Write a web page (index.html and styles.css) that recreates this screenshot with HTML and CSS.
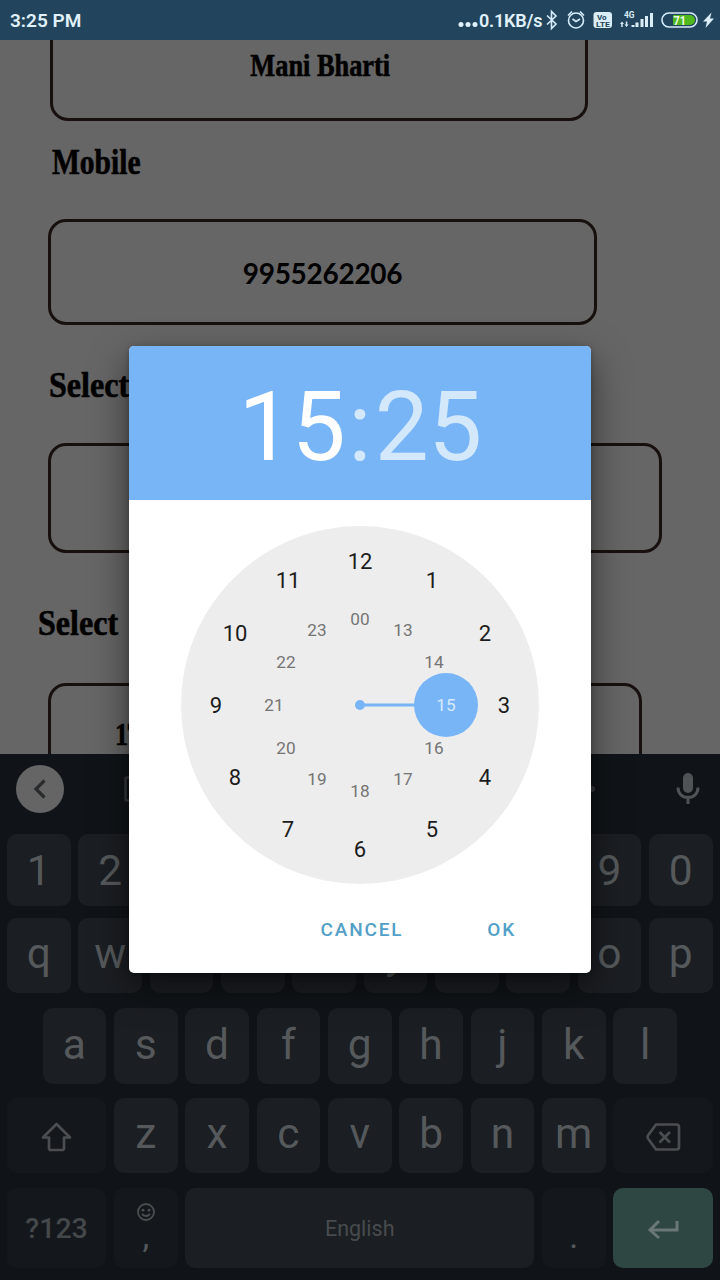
FILE: index.html
```html
<!DOCTYPE html>
<html lang="en">
<head>
<meta charset="utf-8">
<title>Time picker</title>
<link rel="stylesheet" href="styles.css">
</head>
<body>
<div class="screen">
  <header class="status">
    <span class="clock">3:25 PM</span>
    <div class="status-right">
      <svg class="dots" width="20" height="30" viewBox="0 0 20 30"><circle cx="3" cy="19.500" r="2.500"/><circle cx="10" cy="19.500" r="2.500"/><circle cx="17" cy="19.500" r="2.500"/></svg>
      <span class="speed">0.1KB/s</span>
      <svg class="status-icons" width="176" height="40" viewBox="0 0 176 40">
        <g fill="none" stroke="#d6ecfa" stroke-width="1.6">
          <path d="M3 15.500l9 8.500-4.500 4.500v-17l4.500 4.500-9 8.500"/>
          <circle cx="32" cy="20.500" r="7.500"/>
          <path d="M28.500 19l3.500 2.500 4-2.500M24 15.500l4-4M40 15.500l-4-4"/>
          <rect x="118" y="13" width="35" height="14" rx="7"/>
        </g>
        <rect x="49.500" y="12" width="18.500" height="16" rx="3" fill="#dbedf7"/>
        <text class="volte" x="53" y="19.500">Vo</text>
        <text class="volte" x="52" y="26.500" textLength="14" lengthAdjust="spacingAndGlyphs">LTE</text>
        <text class="network" x="80" y="17.500" textLength="10.500" lengthAdjust="spacingAndGlyphs">4G</text>
        <g fill="#dbedf7">
          <path d="M78 21.500l2 2.500h-1.300v3h-1.500v-3h-1.200zM82.500 27l-2-2.500h1.300v-3h1.500v3h1.200z"/>
          <rect x="87.500" y="25" width="3" height="2"/><rect x="91.500" y="22.500" width="3" height="4.500"/><rect x="96.500" y="19" width="3" height="8"/><rect x="101" y="16" width="3" height="11"/><rect x="106" y="13" width="3" height="14"/>
          <path d="M167.500 12.500l-8.500 9h4l-1.500 6.500 8.500-9.500h-4z"/>
        </g>
        <path d="M129 15h17a5 5 0 0 1 0 10h-17z" fill="#4fb81f"/>
        <text class="battery" x="129.500" y="24.600" textLength="12.500" lengthAdjust="spacingAndGlyphs">71</text>
      </svg>
    </div>
  </header>

  <main class="form">
    <div class="field name"><span class="serif value">Mani Bharti</span></div>
    <div class="label mobile-label"><span class="serif">Mobile</span></div>
    <div class="field mobile"><span class="number">9955262206</span></div>
    <div class="label date-label"><span class="serif">Select</span></div>
    <div class="field date"></div>
    <div class="label time-label"><span class="serif">Select</span></div>
    <div class="field time"><span class="serif value">17</span></div>
  </main>

  <section class="keyboard">
    <div class="toolbar">
      <div class="collapse"><svg width="24" height="24" viewBox="0 0 24 24"><path d="M16.500 3.500L8 12l8.500 8.500" fill="none" stroke="#292b2c" stroke-width="3.200"/></svg></div>
      <svg class="clip" width="20" height="26" viewBox="0 0 20 26"><rect x="1.500" y="1.500" width="17" height="23" rx="1" fill="none" stroke="#35393b" stroke-width="2.500"/></svg>
      <svg class="more" width="24" height="8" viewBox="0 0 24 8"><g fill="#36393b"><circle cx="4" cy="4" r="3"/><circle cx="12" cy="4" r="3"/><circle cx="20" cy="4" r="3"/></g></svg>
      <svg class="mic" width="24" height="34" viewBox="0 0 24 34"><rect x="7" y="1" width="10" height="20" rx="5" fill="#505355"/><path d="M2 15.500c0 6 4 10 10 10s10-4 10-10M12 25.500v6.500" fill="none" stroke="#505355" stroke-width="3"/></svg>
    </div>
    <div class="keys digits"><b>1</b><b>2</b><b>3</b><b>4</b><b>5</b><b>6</b><b>7</b><b>8</b><b>9</b><b>0</b></div>
    <div class="keys top"><b>q</b><b>w</b><b>e</b><b>r</b><b>t</b><b>y</b><b>u</b><b>i</b><b>o</b><b>p</b></div>
    <div class="keys home"><b class="second">a</b><b>s</b><b>d</b><b>f</b><b>g</b><b>h</b><b>j</b><b>k</b><b>l</b></div>
    <div class="keys bottom">
      <b class="wide dark"><svg width="32" height="32" viewBox="0 0 32 32"><path d="M15.500 3L2 16.500h6V27q0 2 2 2h11q2 0 2-2V16.500h6z" fill="none" stroke="#4b4e50" stroke-width="2.700" stroke-linejoin="round"/></svg></b>
      <b>z</b><b>x</b><b>c</b><b>v</b><b>b</b><b>n</b><b>m</b>
      <b class="wide dark"><svg width="36" height="30" viewBox="0 0 36 30"><path d="M11 2.500h20.500q2.500 0 2.500 2.500v20q0 2.500-2.500 2.500H11L3 16.500q-1-1.500 0-3zM14.500 10l10.500 10.500M25 10L14.500 20.500" fill="none" stroke="#4b4e50" stroke-width="2.700"/></svg></b>
    </div>
    <div class="keys last">
      <b class="wide dark symbols">?123</b>
      <b class="dark comma"><svg width="20" height="20" viewBox="0 0 20 20"><circle cx="10" cy="10" r="8" fill="none" stroke="#4b4e50" stroke-width="1.800"/><circle cx="7" cy="8.200" r="1.400" fill="#4b4e50"/><circle cx="13" cy="8.200" r="1.400" fill="#4b4e50"/><path d="M6 12q4 4 8 0" fill="none" stroke="#4b4e50" stroke-width="1.800"/></svg><span>,</span></b>
      <b class="space">English</b>
      <b class="dark period">.</b>
      <b class="wide enter"><svg width="32" height="22" viewBox="0 0 32 22"><path d="M30 3v9H3M12 3l-9 9 9 8" fill="none" stroke="#6a7775" stroke-width="3"/></svg></b>
    </div>
  </section>

  <div class="dialog">
    <div class="time-header"><span>15</span><span class="minutes"><span class="colon">:</span>25</span></div>
    <svg class="dial" width="358" height="358" viewBox="-179 -179 358 358">
      <circle r="179" fill="#ededed"/>
      <g fill="#78b5f7"><circle r="5"/><rect y="-1.500" width="60" height="3"/><circle cx="86" r="32"/></g>
      <g class="outer">
        <text x="0" y="-136">12</text><text x="72" y="-117">1</text><text x="125" y="-64">2</text><text x="144" y="8">3</text><text x="125" y="80">4</text><text x="72" y="132">5</text><text x="0" y="152">6</text><text x="-72" y="132">7</text><text x="-125" y="80">8</text><text x="-144" y="8">9</text><text x="-125" y="-64">10</text><text x="-72" y="-117">11</text>
      </g>
      <g class="inner">
        <text x="0" y="-80">00</text><text x="43" y="-69">13</text><text x="74" y="-37">14</text><text class="selected" x="86" y="6">15</text><text x="74" y="49">16</text><text x="43" y="80">17</text><text x="0" y="92">18</text><text x="-43" y="80">19</text><text x="-74" y="49">20</text><text x="-86" y="6">21</text><text x="-74" y="-37">22</text><text x="-43" y="-69">23</text>
      </g>
    </svg>
    <div class="actions"><span>CANCEL</span><span>OK</span></div>
  </div>
</div>
</body>
</html>
```
FILE: styles.css
```css
* { box-sizing: border-box; }
body { margin: 0; font-family: Roboto, sans-serif; }
svg { display: block; flex: none; }
.screen { position: relative; width: 720px; height: 1280px; overflow: hidden; display: flex; flex-direction: column; background: #666; }

.status { height: 40px; flex: none; background: #22455d; color: #e0f1fc; display: flex; justify-content: space-between; align-items: center; padding-left: 10px; font-size: 19px; font-weight: 600; }
.status-right { display: flex; align-items: center; }
.dots { fill: #e0f1fc; margin-right: 1px; }
.speed { width: 65px; font-size: 18px; letter-spacing: -.2px; white-space: nowrap; }
.status-icons { font-weight: 700; }
.volte { font-size: 8px; fill: #22455d; }
.network { font-size: 9px; fill: #dbedf7; }
.battery { font-size: 13px; fill: #eefbe8; }

.form { height: 714px; flex: none; overflow: hidden; color: #000; }
.field { border: 3px solid #17100e; border-radius: 18px; display: flex; align-items: center; justify-content: center; margin-left: 48px; }
.label { height: 40px; line-height: 40px; }
.serif { display: inline-block; font: 700 36px/40px "Liberation Serif", serif; transform-origin: left; transform: scaleX(.89); white-space: nowrap; -webkit-text-stroke: .6px #000; }
.serif.value { font-size: 31px; transform-origin: center; transform: scaleX(.85); }
.name { width: 538px; height: 81px; margin-left: 50px; border-top: 0; border-radius: 0 0 18px 18px; padding: 0 0 26px 2px; }
.mobile-label { margin: 21px 0 37px 52px; }
.mobile-label .serif { transform: scaleX(.82); }
.mobile { width: 549px; height: 106px; }
.number { font: 700 28px/34px Lato, sans-serif; letter-spacing: -.3px; padding-top: 1px; }
.date-label { margin: 40px 0 38px 49px; }
.date { width: 614px; height: 110px; }
.time-label { margin: 50px 0 40px 38px; }
.time { width: 594px; height: 110px; justify-content: flex-start; align-items: flex-start; padding: 29px 0 0 62px; }
.time .serif.value { letter-spacing: -2px; }

.keyboard { height: 526px; flex: none; background: #101418; color: #56595b; }
.toolbar { height: 80px; display: flex; align-items: center; padding: 0 20px 10px 16px; }
.collapse { width: 48px; height: 48px; border-radius: 50%; background: #656565; display: flex; align-items: center; justify-content: center; }
.clip { margin-left: 60px; }
.more { margin-left: auto; }
.mic { margin-left: 80px; }
.keys { display: grid; grid-template-columns: repeat(20, minmax(0, 1fr)); column-gap: 7.8px; padding: 0 7.5px 0 7px; height: 75px; margin-bottom: 15px; }
.keys b { grid-column: span 2; display: flex; align-items: center; justify-content: center; background: #1b1e22; border-radius: 10px; font-size: 42.5px; font-weight: 400; padding-bottom: 4px; }
.digits { height: 72px; margin-bottom: 12px; }
.keys.digits b { padding: 1px 0 0; }
.home { height: 76px; margin-bottom: 14px; }
.keys .second { grid-column: 2 / span 2; }
.keys .wide { grid-column: span 3; padding: 2px 0 0; }
.keys .dark { background: #14171b; }
.last { height: 80px; margin: 0; }
.keys .symbols { font-size: 28.5px; font-weight: 500; color: #45484a; padding: 0; }
.keys .comma { flex-direction: column; justify-content: flex-start; padding-top: 14px; font-size: 34px; }
.comma span { line-height: 34px; margin-top: -3px; }
.keys .space { grid-column: span 10; font-size: 21.5px; color: #484b4d; padding: 0; }
.keys .period { font-size: 34px; align-items: flex-end; padding: 0 0 12px; }
.keys .enter { background: #2f4743; }

.dialog { position: absolute; left: 129px; top: 346px; width: 462px; height: 627px; border-radius: 5px; overflow: hidden; background: #fff; box-shadow: 0 14px 36px rgba(0,0,0,.5), 0 2px 6px rgba(0,0,0,.25); }
.time-header { height: 154px; background: #78b5f7; color: #fff; font-size: 96px; line-height: 163px; text-align: center; letter-spacing: -.6px; }
.minutes { color: #d4e8fc; }
.colon { margin: 0 4px 0 3px; }
.dial { margin: 26px auto 0; text-anchor: middle; }
.outer { font-size: 22px; fill: #1c1c1c; }
.inner { font-size: 17.2px; fill: #747474; }
.selected { fill: #d8e9fc; }
.actions { display: flex; justify-content: flex-end; gap: 84px; padding: 34px 75px 0 0; color: #529fc8; font-size: 19px; line-height: 24px; font-weight: 500; letter-spacing: 1.8px; }
```
